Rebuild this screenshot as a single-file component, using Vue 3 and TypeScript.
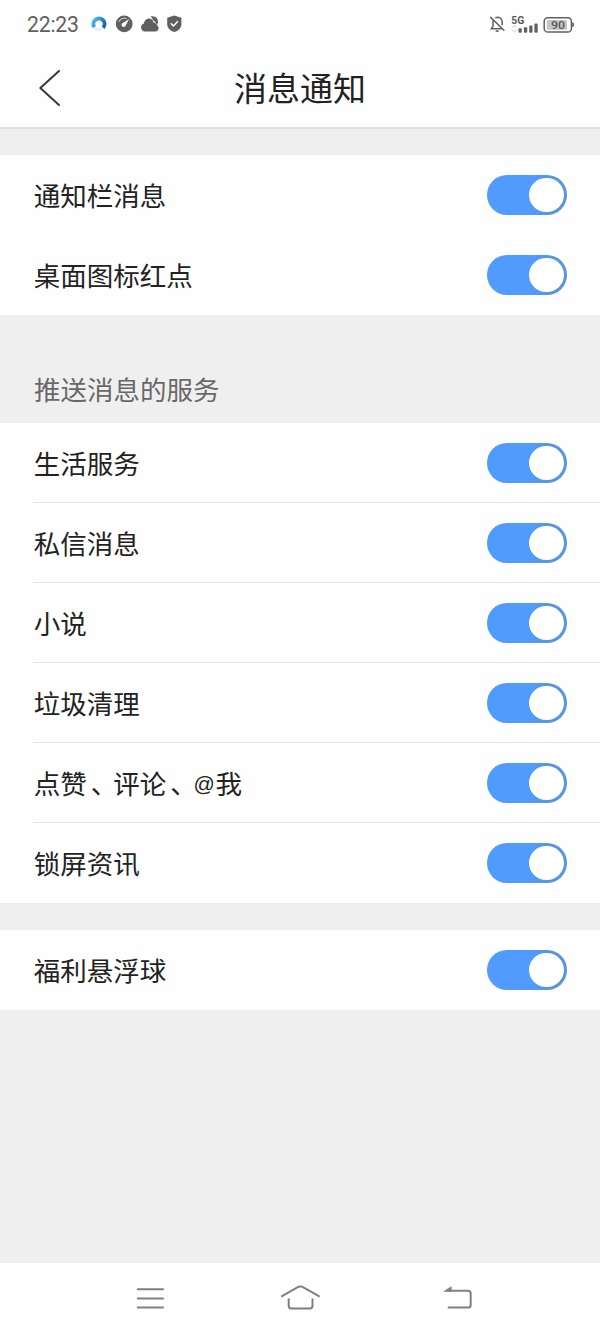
<script setup lang="ts">
import { reactive } from 'vue'

interface Item {
  label: string
  on: boolean
}

const general = reactive<Item[]>([
  { label: '通知栏消息', on: true },
  { label: '桌面图标红点', on: true },
])
const services = reactive<Item[]>([
  { label: '生活服务', on: true },
  { label: '私信消息', on: true },
  { label: '小说', on: true },
  { label: '垃圾清理', on: true },
  { label: '点赞、评论、@我', on: true },
  { label: '锁屏资讯', on: true },
])
const extras = reactive<Item[]>([{ label: '福利悬浮球', on: true }])

const sections = [
  { key: 'general', title: '', lined: false, items: general },
  { key: 'services', title: '推送消息的服务', lined: true, items: services },
  { key: 'extras', title: '', lined: false, items: extras },
]

// Splits a label so that its punctuation can be spaced on its own.
const parts = (label: string): string[] => label.split(/([、@])/).filter(Boolean)
const partClass = (part: string) => ({ comma: part === '、', at: part === '@' })
</script>

<template>
  <div class="screen">
    <header class="top">
      <div class="status">
        <span class="time">22:23</span>
        <svg class="apps" width="96" height="20" viewBox="0 0 96 20">
          <defs>
            <linearGradient id="ring" x1="0" y1="0" x2="1" y2="0.6">
              <stop offset="0" stop-color="#58c2ee" />
              <stop offset="0.5" stop-color="#2f92d3" />
              <stop offset="1" stop-color="#2465a8" />
            </linearGradient>
          </defs>
          <circle cx="10" cy="10" r="5.6" fill="none" stroke="#dff2fb" stroke-width="3" />
          <path d="M5.2 13A5.6 5.6 0 1 1 14.2 13.7" fill="none" stroke="url(#ring)" stroke-width="3.9" />
          <circle cx="35.2" cy="9.9" r="8.4" fill="#606060" />
          <path d="M29.8 8A5.9 5.9 0 0 1 37.6 4.6" fill="none" stroke="#d5d5d5" stroke-width="1" />
          <path d="M40.2 5.1L36.9 11.1A2.2 2.2 0 1 1 34.3 8.7Z" fill="#fff" />
          <path d="M62.4 2.3C66.4 1.5 69.6 4.7 68.9 8.4Q68.5 10.2 67.4 11.3C67 8.4 65.9 6.9 63.9 6.2C63.6 4.4 62.7 3.3 61.4 2.8Z" fill="#606060" />
          <path d="M56 17.5A4.1 4.1 0 0 1 54.9 9.5C55.5 3.8 63.2 2.4 64.5 8.2C66.2 8.6 66.8 9.6 67.4 11.1A3.3 3.3 0 0 1 66.2 17.5Z" fill="#606060" />
          <path d="M85.3 1.5L92.4 3.8V10C92.4 13.8 89.7 16.6 85.3 18.1C80.9 16.6 78.2 13.8 78.2 10V3.8Z" fill="#606060" />
          <path d="M81.8 9.3L84.4 12L88.9 7.2" fill="none" stroke="#fff" stroke-width="1.5" />
        </svg>
        <svg class="system" width="88" height="24" viewBox="0 0 88 24">
          <g fill="none" stroke="#606060" stroke-width="1.5">
            <path d="M5 8.6V14.2L3.3 16.8H15M7.3 6.2C10.4 4 14.2 6.2 14.2 10V13.2M2.2 4.9L16.4 18.8" />
            <path d="M7.7 19.1H10.7" />
          </g>
          <text x="23.2" y="12.3" textLength="13" lengthAdjust="spacingAndGlyphs">5G</text>
          <path d="M24.3 15.5L26.5 13.5L28.7 15.5M24.3 18L26.5 20L28.7 18" fill="none" stroke="#dedede" stroke-width="1.2" />
          <g fill="#606060">
            <rect x="30.5" y="16.2" width="3.3" height="4.5" rx="1" />
            <rect x="35.9" y="15.2" width="3.3" height="5.5" rx="1" />
            <rect x="41.2" y="13.4" width="3.3" height="7.3" rx="1" />
            <rect x="46.4" y="11.4" width="3.3" height="9.3" rx="1" />
            <path d="M84.2 10.5h.4q1.3 0 1.3 1.3v1.9q0 1.3-1.3 1.3h-.4z" />
          </g>
          <rect x="56.2" y="5.7" width="27.2" height="14.4" rx="3.7" fill="#fff" stroke="#606060" stroke-width="1.5" />
          <rect x="58.8" y="8.1" width="20.2" height="9.6" rx="1" fill="#c5c5c5" />
          <text x="63" y="17.3" class="level" textLength="14" lengthAdjust="spacingAndGlyphs">90</text>
        </svg>
      </div>
      <div class="bar">
        <button class="back" aria-label="返回">
          <svg width="24" height="38" viewBox="0 0 24 38">
            <path d="M21 1.9L2.3 19L21 36" fill="none" stroke="#393939" stroke-width="2" stroke-linecap="round" stroke-linejoin="round" />
          </svg>
        </button>
        <h1>消息通知</h1>
      </div>
    </header>

    <main>
      <section v-for="s in sections" :key="s.key" :class="s.key">
        <h2 v-if="s.title">{{ s.title }}</h2>
        <ul :class="{ lined: s.lined }">
          <li v-for="item in s.items" :key="item.label">
            <span class="label"><span v-for="(part, i) in parts(item.label)" :key="i" :class="partClass(part)">{{ part }}</span></span>
            <button
              class="toggle"
              :class="{ off: !item.on }"
              role="switch"
              :aria-checked="item.on"
              :aria-label="item.label"
              @click="item.on = !item.on"
            >
              <span class="knob"></span>
            </button>
          </li>
        </ul>
      </section>
    </main>

    <nav>
      <svg width="40" height="32" viewBox="0 0 40 32">
        <path d="M7.8 6.2H33M7.8 15.4H33M7.8 24.5H33" />
      </svg>
      <svg width="40" height="32" viewBox="0 0 40 32">
        <path d="M2 13.2L16.5 4.8Q20.4 2.4 24.3 4.8L38.8 13.2M8.7 16.2V22.8Q8.7 25.4 11.3 25.4H29.9Q32.5 25.4 32.5 22.8V16.2" />
      </svg>
      <svg width="40" height="32" viewBox="0 0 40 32">
        <path d="M8 7.7H28Q30.7 7.7 30.7 10.4V21.9Q30.7 24.6 28 24.6H8.6" />
        <path class="solid" d="M3.2 8.7Q7 5.7 11.6 3.2V8.7Z" />
      </svg>
    </nav>
  </div>
</template>

<style>
body {
  margin: 0;
}
</style>

<style scoped>
.screen {
  display: flex;
  flex-direction: column;
  width: 600px;
  height: 1333px;
  overflow: hidden;
  background: #efefef;
  color: #222;
  font-family: 'Noto Sans CJK SC', sans-serif;
}
.top {
  box-sizing: border-box;
  height: 129px;
  background: #fefefe;
  border-bottom: 2px solid #e1e1e1;
}
.status {
  display: flex;
  align-items: center;
  height: 49px;
  padding: 0 24.5px 0 27px;
}
.time {
  width: 62px;
  color: #606060;
  font: 21.2px/49px Roboto, sans-serif;
  letter-spacing: -0.2px;
}
.apps {
  margin-bottom: 1px;
}
.system {
  margin: 0 0 2px auto;
}
.status text {
  fill: #5a5a5a;
  font: 700 11px Roboto, sans-serif;
}
.status .level {
  font-size: 11.8px;
  font-weight: 500;
}
.bar {
  display: grid;
  grid-template-columns: 64px 1fr 64px;
  align-items: center;
  height: 78px;
}
button {
  padding: 0;
  border: 0;
  background: none;
}
.back {
  display: flex;
  padding-left: 38px;
}
h1 {
  margin: 0;
  padding-bottom: 2px;
  text-align: center;
  font-size: 33px;
  font-weight: 400;
  line-height: 76px;
}
main {
  flex: 1;
}
.general {
  padding-top: 26px;
}
.extras {
  padding-top: 27px;
}
h2 {
  margin: 0;
  padding: 42px 0 2px 34px;
  color: #686868;
  font-size: 26.5px;
  font-weight: 400;
  line-height: 64px;
}
ul {
  margin: 0;
  padding: 0;
  list-style: none;
  background: #fefefe;
}
li {
  box-sizing: border-box;
  display: flex;
  align-items: center;
  justify-content: space-between;
  height: 80px;
  margin-left: 33px;
  padding-right: 33px;
}
.lined li:not(:last-child) {
  box-shadow: inset 0 -1px #e4e4e4;
}
.label {
  padding-left: 0.8px;
  font-size: 26.5px;
  line-height: 80px;
}
.comma {
  margin: 0 9.25px 0 4px;
  font-feature-settings: 'halt';
}
.at {
  margin: 0 0.7px;
  font-family: 'Liberation Sans', sans-serif;
  font-size: 21px;
  line-height: 1;
  vertical-align: 3px;
}
.toggle {
  box-sizing: border-box;
  display: flex;
  align-items: center;
  justify-content: flex-end;
  width: 80.5px;
  height: 40px;
  padding-right: 2.8px;
  border-radius: 20px;
  background: linear-gradient(90deg, #509bfd 55%, #5595e2 82%);
}
.toggle.off {
  justify-content: flex-start;
  padding-left: 2.8px;
  background: #ccc;
}
.knob {
  width: 34.8px;
  height: 34.8px;
  border-radius: 50%;
  background: #fff;
}
nav {
  display: grid;
  grid-template-columns: 150px 160px 40px;
  justify-content: start;
  height: 50px;
  padding: 20px 0 0 130px;
  background: #fefefe;
}
nav svg {
  fill: none;
  stroke: #808080;
  stroke-width: 2;
  stroke-linecap: round;
}
nav .solid {
  fill: #808080;
  stroke: none;
}
</style>
